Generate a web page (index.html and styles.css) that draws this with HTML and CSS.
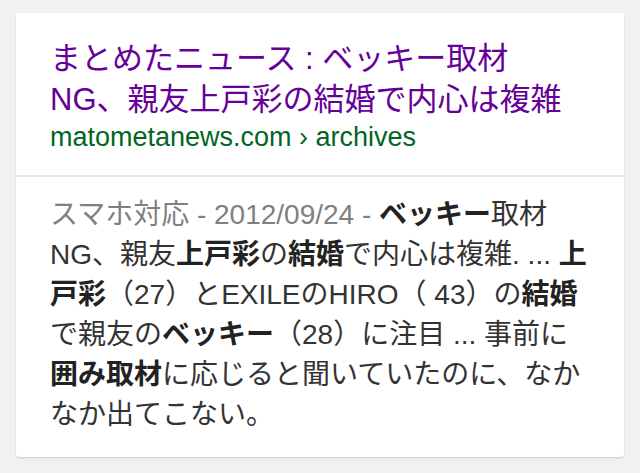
FILE: index.html
```html
<!DOCTYPE html>
<html lang="ja">
<head>
    <meta charset="utf-8">
    <title>まとめたニュース</title>
    <link rel="stylesheet" href="styles.css">
</head>
<body>
    <div class="card">
        <div class="card-head">
            <a class="title" href="#">まとめたニュース : ベッキー取材<br>NG、親友上戸彩の結婚で内心は複雑</a>
            <div class="url">matometanews.com › archives</div>
        </div>
        <div class="snippet">
            <span class="meta">スマホ対応 - 2012/09/24 - </span><b>ベッキー</b>取材<br>
            NG、親友<b>上戸彩</b>の<b>結婚</b>で内心は複雑. ... <b>上</b><br>
            <b>戸彩</b>（27）とEXILEのHIRO（ 43）の<b>結婚</b><br>
            で親友の<b>ベッキー</b>（28）に注目 ... 事前に<br>
            <b>囲み取材</b>に応じると聞いていたのに、なか<br>
            なか出てこない。
        </div>
    </div>
</body>
</html>
```

FILE: styles.css
```css
body {
    margin: 0;
    background: #f1f1f1;
    font-family: "Liberation Sans", "Noto Sans CJK JP", sans-serif;
}

.card {
    margin: 13px 16px;
    background: #fff;
    border-radius: 3px;
    box-shadow: 0 1px 2px rgba(0, 0, 0, 0.15);
}

.card-head {
    padding: 25px 30px 21px 34px;
    border-bottom: 2px solid #e8e8e8;
}

.title {
    display: block;
    color: #660099;
    font-size: 31px;
    line-height: 41px;
    text-decoration: none;
    white-space: nowrap;
}

.url {
    color: #006621;
    font-size: 27px;
    line-height: 34px;
}

.snippet {
    padding: 18px 30px 22px 34px;
    color: #333;
    font-size: 28px;
    line-height: 40px;
    white-space: nowrap;
}

.snippet b {
    color: #222;
}

.meta {
    color: #808080;
}
```
